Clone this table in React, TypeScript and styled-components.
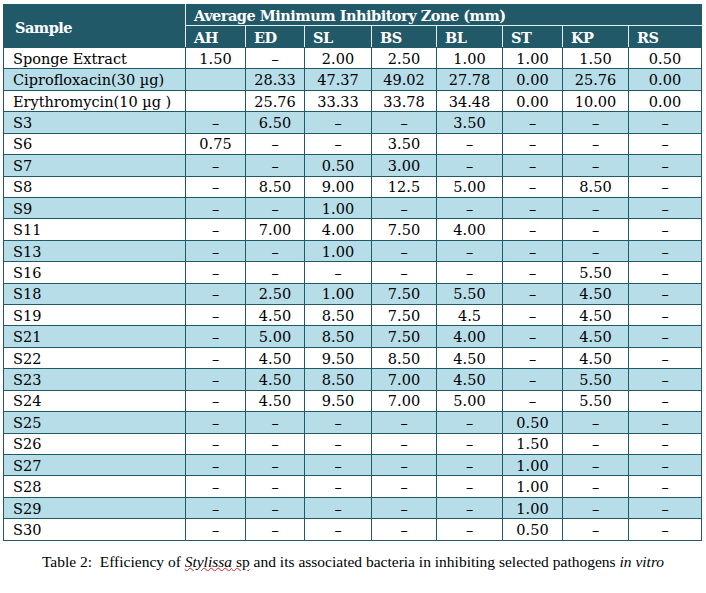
import React from 'react';
import styled, { createGlobalStyle } from 'styled-components';

const GlobalStyle = createGlobalStyle`
  html, body {
    margin: 0;
    padding: 0;
    background: #ffffff;
  }
`;

const columns = ['AH', 'ED', 'SL', 'BS', 'BL', 'ST', 'KP', 'RS'];
const widths = [182, 60, 59, 67, 65, 66, 60, 66, 73];

const D = '–';

const rows: [string, ...string[]][] = [
  ['Sponge Extract', '1.50', D, '2.00', '2.50', '1.00', '1.00', '1.50', '0.50'],
  ['Ciprofloxacin(30 µg)', '', '28.33', '47.37', '49.02', '27.78', '0.00', '25.76', '0.00'],
  ['Erythromycin(10 µg )', '', '25.76', '33.33', '33.78', '34.48', '0.00', '10.00', '0.00'],
  ['S3', D, '6.50', D, D, '3.50', D, D, D],
  ['S6', '0.75', D, D, '3.50', D, D, D, D],
  ['S7', D, D, '0.50', '3.00', D, D, D, D],
  ['S8', D, '8.50', '9.00', '12.5', '5.00', D, '8.50', D],
  ['S9', D, D, '1.00', D, D, D, D, D],
  ['S11', D, '7.00', '4.00', '7.50', '4.00', D, D, D],
  ['S13', D, D, '1.00', D, D, D, D, D],
  ['S16', D, D, D, D, D, D, '5.50', D],
  ['S18', D, '2.50', '1.00', '7.50', '5.50', D, '4.50', D],
  ['S19', D, '4.50', '8.50', '7.50', '4.5', D, '4.50', D],
  ['S21', D, '5.00', '8.50', '7.50', '4.00', D, '4.50', D],
  ['S22', D, '4.50', '9.50', '8.50', '4.50', D, '4.50', D],
  ['S23', D, '4.50', '8.50', '7.00', '4.50', D, '5.50', D],
  ['S24', D, '4.50', '9.50', '7.00', '5.00', D, '5.50', D],
  ['S25', D, D, D, D, D, '0.50', D, D],
  ['S26', D, D, D, D, D, '1.50', D, D],
  ['S27', D, D, D, D, D, '1.00', D, D],
  ['S28', D, D, D, D, D, '1.00', D, D],
  ['S29', D, D, D, D, D, '1.00', D, D],
  ['S30', D, D, D, D, D, '0.50', D, D],
];

const Page = styled.div`
  width: 706px;
  padding-top: 4px;
  font-family: 'DejaVu Serif', 'Liberation Serif', serif;
`;

const Table = styled.table`
  margin-left: 3px;
  width: 699px;
  border-collapse: collapse;
  table-layout: fixed;
  border: 1px solid #215968;
`;

const HeadCell = styled.th<{ $first?: boolean }>`
  background: #215968;
  color: #ffffff;
  font-weight: bold;
  font-size: 14.5px;
  letter-spacing: -0.5px;
  text-align: left;
  padding: ${({ $first }) => ($first ? '3px 0 0 11px' : '1px 0 0 8px')};
  border: 1px solid #e4eef1;
  border-top-color: #215968;
  white-space: nowrap;
  overflow: hidden;
`;

const TopRow = styled.tr`
  height: 21px;

  & > th:last-child {
    border-right-color: #215968;
  }
  & > th:first-child {
    border-left-color: #215968;
    border-bottom-color: #215968;
  }
`;

const SubRow = styled.tr`
  height: 22px;

  & > th {
    border-bottom-color: #215968;
  }
  & > th:last-child {
    border-right-color: #215968;
  }
`;

const BodyRow = styled.tr<{ $shade: boolean }>`
  height: 21.43px;
  background: ${({ $shade }) => ($shade ? '#b7dde8' : '#ffffff')};
`;

const Cell = styled.td<{ $label?: boolean }>`
  border: 1px solid #215968;
  padding: 1px 0 0 ${({ $label }) => ($label ? '9px' : '0')};
  font-size: 14.5px;
  line-height: 18px;
  color: #000000;
  text-align: ${({ $label }) => ($label ? 'left' : 'center')};
  white-space: nowrap;
  overflow: hidden;
`;

const Caption = styled.p`
  margin: 12px 0 0;
  width: 706px;
  text-align: center;
  font-family: 'Liberation Serif', 'Times New Roman', serif;
  font-size: 15.5px;
  color: #000000;
  white-space: pre;
`;

const Misspelt = styled.span`
  text-decoration: underline wavy #e02020;
  text-decoration-thickness: 1px;
  text-underline-offset: 0px;
`;

export default function App() {
  return (
    <>
      <GlobalStyle />
      <Page>
        <Table>
          <colgroup>
            {widths.map((w, i) => (
              <col key={i} style={{ width: w }} />
            ))}
          </colgroup>
          <thead>
            <TopRow>
              <HeadCell $first rowSpan={2}>
                Sample
              </HeadCell>
              <HeadCell colSpan={8}>Average Minimum Inhibitory Zone (mm)</HeadCell>
            </TopRow>
            <SubRow>
              {columns.map((c) => (
                <HeadCell key={c}>{c}</HeadCell>
              ))}
            </SubRow>
          </thead>
          <tbody>
            {rows.map((r, i) => (
              <BodyRow key={r[0]} $shade={i % 2 === 1}>
                {r.map((v, j) => (
                  <Cell key={j} $label={j === 0}>
                    {v}
                  </Cell>
                ))}
              </BodyRow>
            ))}
          </tbody>
        </Table>
        <Caption>
          {'Table 2:  Efficiency of '}
          <Misspelt>
            <i>Stylissa</i> sp
          </Misspelt>
          {' and its associated bacteria in inhibiting selected pathogens '}
          <i>in vitro</i>
        </Caption>
      </Page>
    </>
  );
}
